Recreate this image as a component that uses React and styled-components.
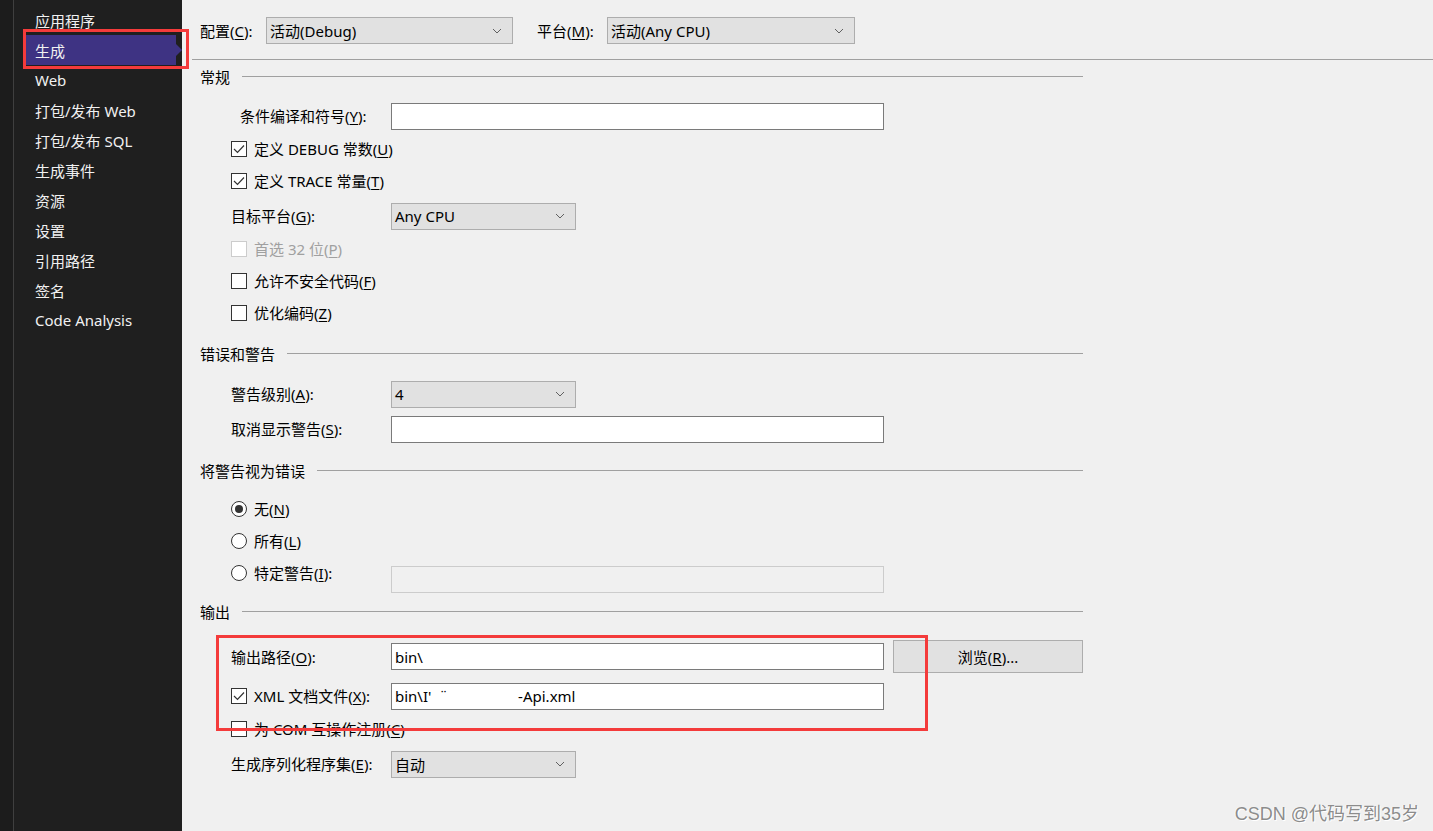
import React from "react";
import styled, { createGlobalStyle } from "styled-components";

const GlobalStyle = createGlobalStyle`
  html, body {
    margin: 0;
    padding: 0;
    background: #f0f0f0;
  }
  body {
    font-family: "Noto Sans", "Noto Sans CJK SC", sans-serif;
    font-size: 15px;
    color: #000;
  }
  u {
    text-underline-offset: 2px;
  }
`;

const Page = styled.div`
  display: flex;
  width: 1433px;
  height: 831px;
  overflow: hidden;
  position: relative;
`;

const Sidebar = styled.div`
  position: relative;
  display: flex;
  width: 182px;
  flex-shrink: 0;
  background: #1f1f1f;
`;

const Strip = styled.div`
  width: 13px;
  border-right: 1px solid #3f3f3f;
  background: #1c1c1c;
`;

const NavList = styled.div`
  display: flex;
  flex-direction: column;
  padding: 5px 0 0 12px;
  flex: 1;
`;

const NavItem = styled.div`
  position: relative;
  height: 30px;
  width: 150px;
  display: flex;
  align-items: center;
  padding-left: 9px;
  box-sizing: border-box;
  color: #f1f1f1;
  font-size: 15px;
  white-space: nowrap;
  background: ${(p) => (p.$active ? "#3e3383" : "transparent")};
  &::after {
    content: "";
    display: ${(p) => (p.$active ? "block" : "none")};
    position: absolute;
    right: -6px;
    top: 9px;
    border-left: 6px solid #3e3383;
    border-top: 6px solid transparent;
    border-bottom: 6px solid transparent;
  }
`;

const Marker = styled.div`
  position: absolute;
  left: ${(p) => p.$x}px;
  top: ${(p) => p.$y}px;
  width: ${(p) => p.$w}px;
  height: ${(p) => p.$h}px;
  border: 3px solid #f43b3b;
  box-sizing: border-box;
  z-index: 5;
  pointer-events: none;
`;

const Main = styled.div`
  position: relative;
  flex: 1;
  background: #f0f0f0;
`;

const TopBar = styled.div`
  display: flex;
  align-items: center;
  padding: 17px 0 0 18px;
`;

const TopLabel = styled.span`
  width: ${(p) => p.$w}px;
  line-height: 20px;
  white-space: nowrap;
`;

const SelectBox = styled.div`
  display: flex;
  align-items: center;
  justify-content: space-between;
  width: ${(p) => p.$w}px;
  height: 27px;
  box-sizing: border-box;
  padding: 0 10px 0 3px;
  background: #e1e1e1;
  border: 1px solid #adadad;
  margin-right: ${(p) => p.$mr || 0}px;
`;

const TopRule = styled.div`
  height: 1px;
  background: #a0a0a0;
  margin: 15px 0 0 10px;
`;

const Form = styled.div`
  width: 883px;
  margin-left: 18px;
  display: flex;
  flex-direction: column;
`;

const SectionHeader = styled.div`
  display: flex;
  align-items: center;
  gap: 12px;
  height: 20px;
  margin-top: ${(p) => p.$mt}px;
  &::after {
    content: "";
    flex: 1;
    height: 1px;
    background: #a0a0a0;
  }
`;

const Row = styled.div`
  display: flex;
  align-items: center;
  height: ${(p) => p.$h || 32}px;
  margin-top: ${(p) => p.$mt || 0}px;
  padding-left: 31px;
`;

const LabelCell = styled.div`
  width: 160px;
  flex-shrink: 0;
  box-sizing: border-box;
  padding-left: ${(p) => p.$indent || 0}px;
  line-height: 20px;
  white-space: nowrap;
  align-self: ${(p) => (p.$top ? "flex-start" : "center")};
  display: flex;
  align-items: center;
  gap: 7px;
  color: ${(p) => (p.$disabled ? "#a0a0a0" : "#000")};
`;

const TextBox = styled.div`
  width: 493px;
  height: 27px;
  box-sizing: border-box;
  padding: 0 3px;
  display: flex;
  align-items: center;
  white-space: pre;
  background: ${(p) => (p.$disabled ? "#f0f0f0" : "#fff")};
  border: 1px solid ${(p) => (p.$disabled ? "#cccccc" : "#7a7a7a")};
`;

const Button = styled.div`
  width: 190px;
  height: 33px;
  margin-left: 9px;
  box-sizing: border-box;
  display: flex;
  align-items: center;
  justify-content: center;
  background: #e1e1e1;
  border: 1px solid #adadad;
`;

const Box = styled.span`
  width: 16px;
  height: 16px;
  box-sizing: border-box;
  flex-shrink: 0;
  display: inline-flex;
  align-items: center;
  justify-content: center;
  background: #fff;
  border: 1px solid ${(p) => (p.$disabled ? "#cccccc" : "#333")};
  border-radius: ${(p) => (p.$round ? "50%" : "0")};
`;

const Dot = styled.span`
  width: 8px;
  height: 8px;
  border-radius: 50%;
  background: #333;
`;

const Watermark = styled.div`
  position: absolute;
  right: 14px;
  bottom: 6px;
  font-family: "Liberation Sans", "Noto Sans CJK SC", sans-serif;
  font-size: 18px;
  color: #8c8c8c;
  text-shadow: 1px 1px 0 #ffffff, -1px 0 0 #fafafa;
  z-index: 6;
`;

const Chevron = () => (
  <svg width="10" height="6" viewBox="0 0 10 6">
    <polyline points="1,1 5,5 9,1" fill="none" stroke="#606060" strokeWidth="1" />
  </svg>
);

const Check = ({ checked, disabled }) => (
  <Box $disabled={disabled}>
    {checked && (
      <svg width="12" height="10" viewBox="0 0 12 10">
        <polyline points="1,5 4.5,8.5 11,1.5" fill="none" stroke="#333" strokeWidth="1.2" />
      </svg>
    )}
  </Box>
);

const Radio = ({ checked }) => (
  <Box $round>{checked && <Dot />}</Box>
);

const Select = ({ w, mr, children }) => (
  <SelectBox $w={w} $mr={mr}>
    <span>{children}</span>
    <Chevron />
  </SelectBox>
);

// label text with an underlined access key, e.g. ("配置", "C", ":")
const Mn = ({ text, k, colon }) => (
  <span>
    {text}(<u>{k}</u>){colon ? ":" : ""}
  </span>
);

const navItems = [
  "应用程序",
  "生成",
  "Web",
  "打包/发布 Web",
  "打包/发布 SQL",
  "生成事件",
  "资源",
  "设置",
  "引用路径",
  "签名",
  "Code Analysis",
];

function App() {
  return (
    <>
      <GlobalStyle />
      <Page>
        <Sidebar>
          <Strip />
          <NavList>
            {navItems.map((item) => (
              <NavItem key={item} $active={item === "生成"}>
                {item}
              </NavItem>
            ))}
          </NavList>
          <Marker $x={23} $y={29} $w={166} $h={40} />
        </Sidebar>
        <Main>
          <TopBar>
            <TopLabel $w={66}>
              <Mn text="配置" k="C" colon />
            </TopLabel>
            <Select w={247} mr={24}>活动(Debug)</Select>
            <TopLabel $w={70}>
              <Mn text="平台" k="M" colon />
            </TopLabel>
            <Select w={248}>活动(Any CPU)</Select>
          </TopBar>
          <TopRule />
          <Form>
            <SectionHeader $mt={6}>常规</SectionHeader>
            <Row $mt={14}>
              <LabelCell $indent={9}>
                <Mn text="条件编译和符号" k="Y" colon />
              </LabelCell>
              <TextBox />
            </Row>
            <Row $mt={1}>
              <LabelCell>
                <Check checked />
                <Mn text="定义 DEBUG 常数" k="U" />
              </LabelCell>
            </Row>
            <Row>
              <LabelCell>
                <Check checked />
                <Mn text="定义 TRACE 常量" k="T" />
              </LabelCell>
            </Row>
            <Row $mt={3}>
              <LabelCell>
                <Mn text="目标平台" k="G" colon />
              </LabelCell>
              <Select w={185}>Any CPU</Select>
            </Row>
            <Row $mt={1}>
              <LabelCell $disabled>
                <Check disabled />
                <Mn text="首选 32 位" k="P" />
              </LabelCell>
            </Row>
            <Row>
              <LabelCell>
                <Check />
                <Mn text="允许不安全代码" k="F" />
              </LabelCell>
            </Row>
            <Row>
              <LabelCell>
                <Check />
                <Mn text="优化编码" k="Z" />
              </LabelCell>
            </Row>

            <SectionHeader $mt={14}>错误和警告</SectionHeader>
            <Row $mt={15}>
              <LabelCell>
                <Mn text="警告级别" k="A" colon />
              </LabelCell>
              <Select w={185}>4</Select>
            </Row>
            <Row $mt={3}>
              <LabelCell>
                <Mn text="取消显示警告" k="S" colon />
              </LabelCell>
              <TextBox />
            </Row>

            <SectionHeader $mt={15}>将警告视为错误</SectionHeader>
            <Row $mt={13}>
              <LabelCell>
                <Radio checked />
                <Mn text="无" k="N" />
              </LabelCell>
            </Row>
            <Row>
              <LabelCell>
                <Radio />
                <Mn text="所有" k="L" />
              </LabelCell>
            </Row>
            <Row $mt={6}>
              <LabelCell $top>
                <Radio />
                <Mn text="特定警告" k="I" colon />
              </LabelCell>
              <TextBox $disabled />
            </Row>

            <SectionHeader $mt={6}>输出</SectionHeader>
            <Row $mt={19} $h={33}>
              <LabelCell>
                <Mn text="输出路径" k="O" colon />
              </LabelCell>
              <TextBox>bin\</TextBox>
              <Button>
                <span>
                  浏览(<u>R</u>)...
                </span>
              </Button>
            </Row>
            <Row $mt={7}>
              <LabelCell>
                <Check checked />
                <Mn text="XML 文档文件" k="X" colon />
              </LabelCell>
              <TextBox>{"bin\\I'  ¨                  -Api.xml"}</TextBox>
            </Row>
            <Row $mt={1}>
              <LabelCell>
                <Check />
                <Mn text="为 COM 互操作注册" k="C" />
              </LabelCell>
            </Row>
            <Row $mt={3}>
              <LabelCell>
                <Mn text="生成序列化程序集" k="E" colon />
              </LabelCell>
              <Select w={185}>自动</Select>
            </Row>
          </Form>
          <Marker $x={34} $y={635} $w={712} $h={96} />
        </Main>
        <Watermark>CSDN @代码写到35岁</Watermark>
      </Page>
    </>
  );
}

export default App;
